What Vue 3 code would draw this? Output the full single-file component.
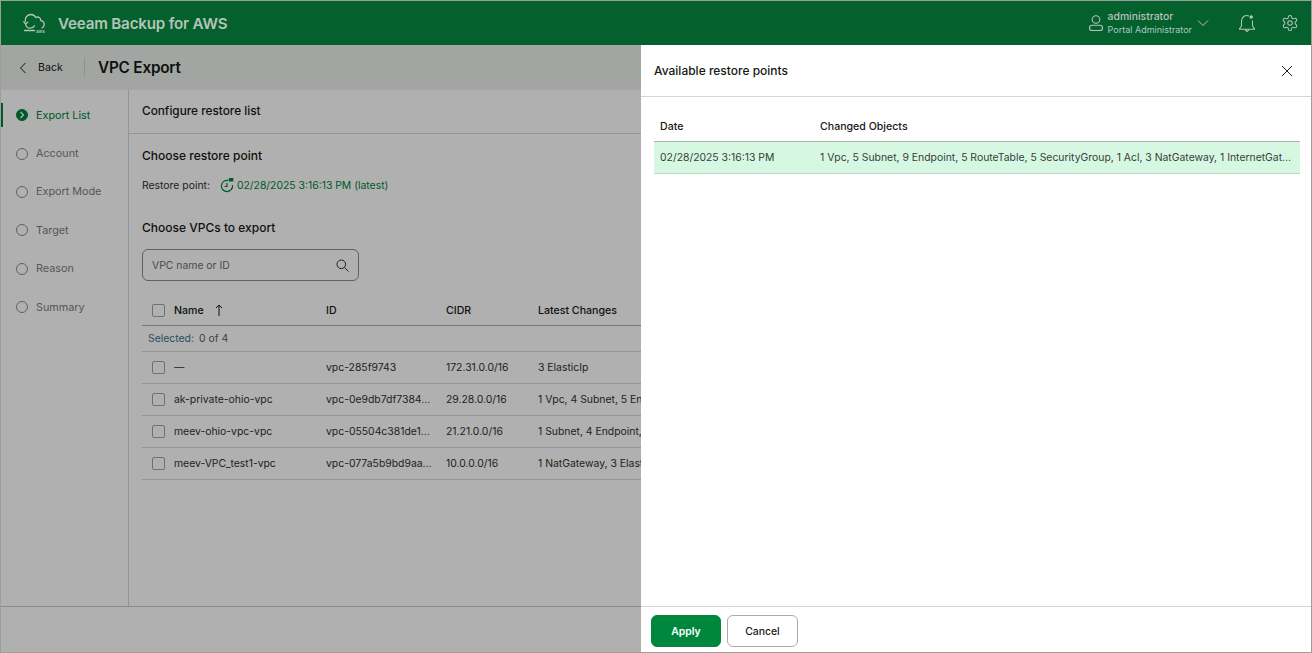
<script setup>
const steps = [
  { label: 'Export List', active: true },
  { label: 'Account' },
  { label: 'Export Mode' },
  { label: 'Target' },
  { label: 'Reason' },
  { label: 'Summary' },
];

const vpcs = [
  { name: '—', id: 'vpc-285f9743', cidr: '172.31.0.0/16', changes: '3 ElasticIp' },
  { name: 'ak-private-ohio-vpc', id: 'vpc-0e9db7df7384...', cidr: '29.28.0.0/16', changes: '1 Vpc, 4 Subnet, 5 Endpoint, 5 RouteTable' },
  { name: 'meev-ohio-vpc-vpc', id: 'vpc-05504c381de1...', cidr: '21.21.0.0/16', changes: '1 Subnet, 4 Endpoint, 2 RouteTable' },
  { name: 'meev-VPC_test1-vpc', id: 'vpc-077a5b9bd9aa...', cidr: '10.0.0.0/16', changes: '1 NatGateway, 3 ElasticIp, 2 Subnet' },
];
</script>

<template>
  <div class="app">
    <header class="topbar">
      <div class="brand">
        <svg class="logo" width="24" height="22" viewBox="0 0 24 22" fill="none" stroke="currentColor" stroke-width="1.300" stroke-linecap="round" stroke-linejoin="round">
          <path d="M3.200 9.500C2.800 5.500 5.300 2.500 8.800 2.500c2.200 0 4 1.100 5 3 2.300-1.300 5.100.3 5.100 3.200 2 .4 3.300 1.900 3.300 3.800 0 1.500-.8 2.800-2.200 3.500" />
          <path d="M1.800 9.800 3.600 12l2.200-1.800" />
          <path d="M3.600 12c.3 2.500 2.200 4.200 4.600 4.200 1.800 0 3.300-.9 4.200-2.400" />
          <path d="M2.500 18.500h10" />
          <text x="14" y="20.500" font-size="4.500" font-weight="600" fill="currentColor" stroke="none">aws</text>
        </svg>
        <span class="brand-name">Veeam Backup for AWS</span>
      </div>
      <div class="top-actions">
        <div class="user">
          <svg width="16" height="18" viewBox="0 0 16 18" fill="none" stroke="currentColor" stroke-width="1.100">
            <circle cx="8" cy="5.500" r="3.800" />
            <rect x="1.500" y="11.200" width="13" height="5.300" rx="2.600" />
          </svg>
          <div class="user-text">
            <span class="user-name">administrator</span>
            <span class="user-role">Portal Administrator</span>
          </div>
          <svg class="chev" width="12" height="8" viewBox="0 0 12 8" fill="none" stroke="currentColor" stroke-width="1">
            <path d="M1 1.500 6 6.500l5-5" />
          </svg>
        </div>
        <svg class="bell" width="18" height="19" viewBox="0 0 18 19" fill="none" stroke="currentColor" stroke-width="1.100" stroke-linejoin="round">
          <path d="M10.800 1.900C7 .6 3.500 3.200 3.500 7.200v3.900c0 1.600-.7 2.600-1.900 3.400-.3.300-.1.700.3.700h14.200c.4 0 .6-.4.300-.7-1.200-.8-1.900-1.800-1.900-3.400V6.500" />
          <path d="M6.800 15.400 9 17.600l2.200-2.200" />
          <circle cx="13.200" cy="3" r="1.800" fill="currentColor" stroke="none" />
        </svg>
        <svg width="18" height="18" viewBox="0 0 24 24" fill="none" stroke="currentColor" stroke-width="1.400" stroke-linecap="round" stroke-linejoin="round">
          <path d="M12.220 2h-.44a2 2 0 0 0-2 2v.18a2 2 0 0 1-1 1.730l-.43.250a2 2 0 0 1-2 0l-.15-.08a2 2 0 0 0-2.730.730l-.22.380a2 2 0 0 0 .730 2.730l.15.100a2 2 0 0 1 1 1.720v.510a2 2 0 0 1-1 1.740l-.15.090a2 2 0 0 0-.730 2.730l.22.380a2 2 0 0 0 2.730.730l.15-.08a2 2 0 0 1 2 0l.43.250a2 2 0 0 1 1 1.730V20a2 2 0 0 0 2 2h.44a2 2 0 0 0 2-2v-.18a2 2 0 0 1 1-1.730l.43-.25a2 2 0 0 1 2 0l.15.080a2 2 0 0 0 2.730-.730l.22-.39a2 2 0 0 0-.730-2.730l-.15-.08a2 2 0 0 1-1-1.740v-.5a2 2 0 0 1 1-1.740l.15-.09a2 2 0 0 0 .730-2.730l-.22-.38a2 2 0 0 0-2.730-.730l-.15.080a2 2 0 0 1-2 0l-.43-.25a2 2 0 0 1-1-1.730V4a2 2 0 0 0-2-2z" />
          <circle cx="12" cy="12" r="3" />
        </svg>
      </div>
    </header>

    <div class="workspace">
      <div class="page">
        <div class="page-head">
          <div class="back">
            <svg width="8" height="12" viewBox="0 0 8 12" fill="none" stroke="currentColor" stroke-width="1">
              <path d="M6.500 1 1.500 6l5 5" />
            </svg>
            <span>Back</span>
          </div>
          <div class="page-title">VPC Export</div>
        </div>
        <div class="page-body">
          <nav class="steps">
            <div v-for="step in steps" :key="step.label" class="step" :class="{ active: step.active }">
              <span class="step-dot">
                <svg v-if="step.active" width="6" height="8" viewBox="0 0 6 8" fill="none" stroke="currentColor" stroke-width="1.200">
                  <path d="M1.500 1 4.500 4l-3 3" />
                </svg>
              </span>
              <span>{{ step.label }}</span>
            </div>
          </nav>
          <main class="content">
            <div class="content-title">Configure restore list</div>
            <section class="form">
              <h3>Choose restore point</h3>
              <div class="point-row">
                <span>Restore point:</span>
                <span class="point-link">
                  <svg width="14" height="15" viewBox="0 0 14 15" fill="none" stroke="currentColor" stroke-width="1.200">
                    <path d="M8.300 2.500A5.600 5.600 0 1 0 12.500 7" />
                    <path d="M7 5v3.500H4.500" />
                    <rect x="8.800" y="0" width="4.500" height="3.500" fill="currentColor" stroke="none" />
                  </svg>
                  02/28/2025 3:16:13 PM (latest)
                </span>
              </div>
              <h3 class="vpc-title">Choose VPCs to export</h3>
              <div class="search">
                <span>VPC name or ID</span>
                <svg width="13" height="13" viewBox="0 0 13 13" fill="none" stroke="#2c2f2c" stroke-width="1">
                  <circle cx="5.300" cy="5.300" r="4.300" />
                  <path d="m8.500 8.500 4 4" />
                </svg>
              </div>
              <div class="vpc-table">
                <div class="row head">
                  <span class="box"></span>
                  <span class="name-cell">
                    Name
                    <svg width="8" height="12" viewBox="0 0 8 12" fill="none" stroke="currentColor" stroke-width="1">
                      <path d="M4 12V1M1 4l3-3 3 3" />
                    </svg>
                  </span>
                  <span>ID</span>
                  <span>CIDR</span>
                  <span>Latest Changes</span>
                </div>
                <div class="selected-row"><span class="sel-label">Selected:</span> <span class="sel-count">0 of 4</span></div>
                <div v-for="vpc in vpcs" :key="vpc.id" class="row">
                  <span class="box"></span>
                  <span>{{ vpc.name }}</span>
                  <span>{{ vpc.id }}</span>
                  <span>{{ vpc.cidr }}</span>
                  <span>{{ vpc.changes }}</span>
                </div>
              </div>
            </section>
          </main>
        </div>
        <div class="page-foot"></div>
      </div>

      <div class="scrim"></div>

      <aside class="drawer">
        <div class="drawer-head">
          <span>Available restore points</span>
          <svg width="12" height="12" viewBox="0 0 12 12" fill="none" stroke="#1f211f" stroke-width="1">
            <path d="m1 1 10 10M11 1 1 11" />
          </svg>
        </div>
        <div class="drawer-body">
          <div class="point-grid grid-head">
            <span>Date</span>
            <span>Changed Objects</span>
          </div>
          <div class="point-grid grid-row">
            <span>02/28/2025 3:16:13 PM</span>
            <span class="objects">1 Vpc, 5 Subnet, 9 Endpoint, 5 RouteTable, 5 SecurityGroup, 1 Acl, 3 NatGateway, 1 InternetGat...</span>
          </div>
        </div>
        <div class="drawer-foot">
          <button type="button" class="btn primary">Apply</button>
          <button type="button" class="btn">Cancel</button>
        </div>
      </aside>
    </div>
  </div>
</template>

<style scoped>
.app {
  box-sizing: border-box;
  width: 1312px;
  height: 653px;
  display: flex;
  flex-direction: column;
  border: 1px solid #9c9e9c;
  font-family: Inter, "Liberation Sans", sans-serif;
  font-size: 10.400px;
  color: #2f312f;
  overflow: hidden;
}

.topbar {
  flex: 0 0 44px;
  display: flex;
  align-items: center;
  justify-content: space-between;
  background: #04602d;
  color: #b4c4b8;
  padding: 0 12px 0 21px;
}

.brand {
  display: flex;
  align-items: center;
  gap: 12px;
}

.brand-name {
  font-size: 15.200px;
  font-weight: 600;
  letter-spacing: -0.2px;
}

.top-actions {
  display: flex;
  align-items: center;
  gap: 25px;
}

.user {
  display: flex;
  align-items: center;
  gap: 4px;
  margin-right: 4px;
}

.user-text {
  display: flex;
  flex-direction: column;
  line-height: 13px;
}

.user-name {
  font-weight: 500;
}

.user-role {
  font-size: 9px;
  color: #a9c9c4;
}

.chev {
  margin-left: 1px;
}

.workspace {
  position: relative;
  flex: 1;
  min-height: 0;
}

.page {
  height: 100%;
  display: flex;
  flex-direction: column;
  background: #fbfdfb;
}

.page-head {
  flex: 0 0 45px;
  display: flex;
  align-items: center;
  background: #eaece9;
  color: #161816;
}

.back {
  width: 84px;
  display: flex;
  align-items: center;
  gap: 11px;
  padding-left: 18px;
  box-sizing: border-box;
  height: 19px;
  border-right: 1px solid #cfd1cf;
  font-size: 10.600px;
}

.page-title {
  margin-left: 13px;
  margin-bottom: 1px;
  font-size: 15.300px;
  font-weight: 600;
  letter-spacing: -0.2px;
}

.page-body {
  flex: 1;
  min-height: 0;
  display: flex;
}

.steps {
  flex: 0 0 128px;
  box-sizing: border-box;
  border-right: 1px solid #d3d5d3;
  padding-top: 7px;
  color: #7c7e7c;
  font-size: 10.800px;
}

.step {
  height: 38.400px;
  display: flex;
  align-items: center;
  gap: 8px;
  padding-left: 15px;
  box-sizing: border-box;
}

.step.active {
  color: #00803c;
  box-shadow: inset 2px 0 0 #00803c;
  height: 24px;
  margin: 6px 0 7.400px;
}

.step-dot {
  box-sizing: border-box;
  width: 12px;
  height: 12px;
  display: flex;
  align-items: center;
  justify-content: center;
  border: 1px solid #8a8c8a;
  border-radius: 50%;
}

.step.active .step-dot {
  background: #00803c;
  border-color: #00803c;
  color: #fff;
}

.content {
  flex: 1;
  min-width: 0;
}

.content-title {
  box-sizing: border-box;
  height: 44px;
  display: flex;
  align-items: center;
  padding: 0 0 2px 13px;
  border-bottom: 1px solid #d3d5d3;
  font-size: 11.800px;
  font-weight: 500;
  color: #161816;
}

.form {
  padding: 14px 13px 0;
}

h3 {
  margin: 0;
  font-size: 12px;
  font-weight: 500;
  line-height: 16px;
  color: #161816;
}

.point-row {
  margin-top: 13px;
  display: flex;
  align-items: center;
  gap: 10px;
  height: 16px;
}

.point-link {
  display: flex;
  align-items: center;
  gap: 3px;
  color: #00803c;
}

.vpc-title {
  margin-top: 27px;
}

.search {
  box-sizing: border-box;
  width: 217px;
  height: 32px;
  margin-top: 13px;
  display: flex;
  align-items: center;
  justify-content: space-between;
  padding: 0 9px;
  border: 1px solid #8a8c8a;
  border-radius: 6px;
  color: #6d6f6d;
}

.vpc-table {
  margin-top: 13px;
  width: 900px;
}

.row {
  box-sizing: border-box;
  display: grid;
  grid-template-columns: 32px 152px 120px 92px 1fr;
  align-items: center;
  height: 32px;
  border-bottom: 1px solid #d3d5d3;
  white-space: nowrap;
}

.row.head {
  padding-top: 1px;
  font-size: 10.600px;
  font-weight: 500;
  color: #161816;
  border-bottom-color: #a9aba9;
}

.box {
  box-sizing: border-box;
  width: 13px;
  height: 13px;
  margin-left: 10px;
  border: 1px solid #a0a2a0;
  border-radius: 2px;
}

.name-cell {
  display: flex;
  align-items: center;
  gap: 11px;
}

.selected-row {
  box-sizing: border-box;
  height: 26px;
  display: flex;
  align-items: center;
  gap: 5px;
  padding-left: 6px;
  border-bottom: 1px solid #d3d5d3;
}

.sel-label {
  color: #3f6f8a;
}

.sel-count {
  color: #5a5c6a;
}

.page-foot {
  flex: 0 0 46px;
  border-top: 1px solid #c4c6c4;
  box-sizing: border-box;
}

.scrim {
  position: absolute;
  inset: 0;
  background: rgba(0, 0, 0, 0.3);
}

.drawer {
  position: absolute;
  top: 0;
  right: 0;
  bottom: 0;
  width: 670px;
  display: flex;
  flex-direction: column;
  background: #fff;
}

.drawer-head {
  flex: 0 0 52px;
  box-sizing: border-box;
  display: flex;
  align-items: center;
  justify-content: space-between;
  padding: 0 18px 0 13px;
  border-bottom: 1px solid #d4d6d4;
  font-size: 12px;
  font-weight: 500;
  color: #161816;
}

.drawer-body {
  flex: 1;
  padding: 14px 11px 0 13px;
}

.point-grid {
  display: grid;
  grid-template-columns: 160px 1fr;
  padding-left: 6px;
  align-items: center;
}

.grid-head {
  height: 30px;
  font-size: 10.600px;
  font-weight: 500;
  color: #161816;
}

.grid-row {
  height: 33px;
  box-sizing: border-box;
  padding-right: 10px;
  background: #d6f8e3;
  border-top: 1px solid #a9b4ad;
  border-bottom: 1px solid #c4d6ca;
  color: #3a3c3a;
}

.objects {
  white-space: nowrap;
}

.drawer-foot {
  flex: 0 0 46px;
  box-sizing: border-box;
  display: flex;
  align-items: flex-start;
  gap: 6px;
  padding: 8px 0 0 10px;
  border-top: 1px solid #d4d6d4;
}

.btn {
  box-sizing: border-box;
  width: 71px;
  height: 32px;
  border: 1px solid #a9aba9;
  border-radius: 6px;
  background: #fff;
  font: inherit;
  font-weight: 500;
  color: #161816;
}

.btn.primary {
  width: 70px;
  background: #00873e;
  border-color: #00873e;
  color: #fff;
  font-weight: 600;
}
</style>
